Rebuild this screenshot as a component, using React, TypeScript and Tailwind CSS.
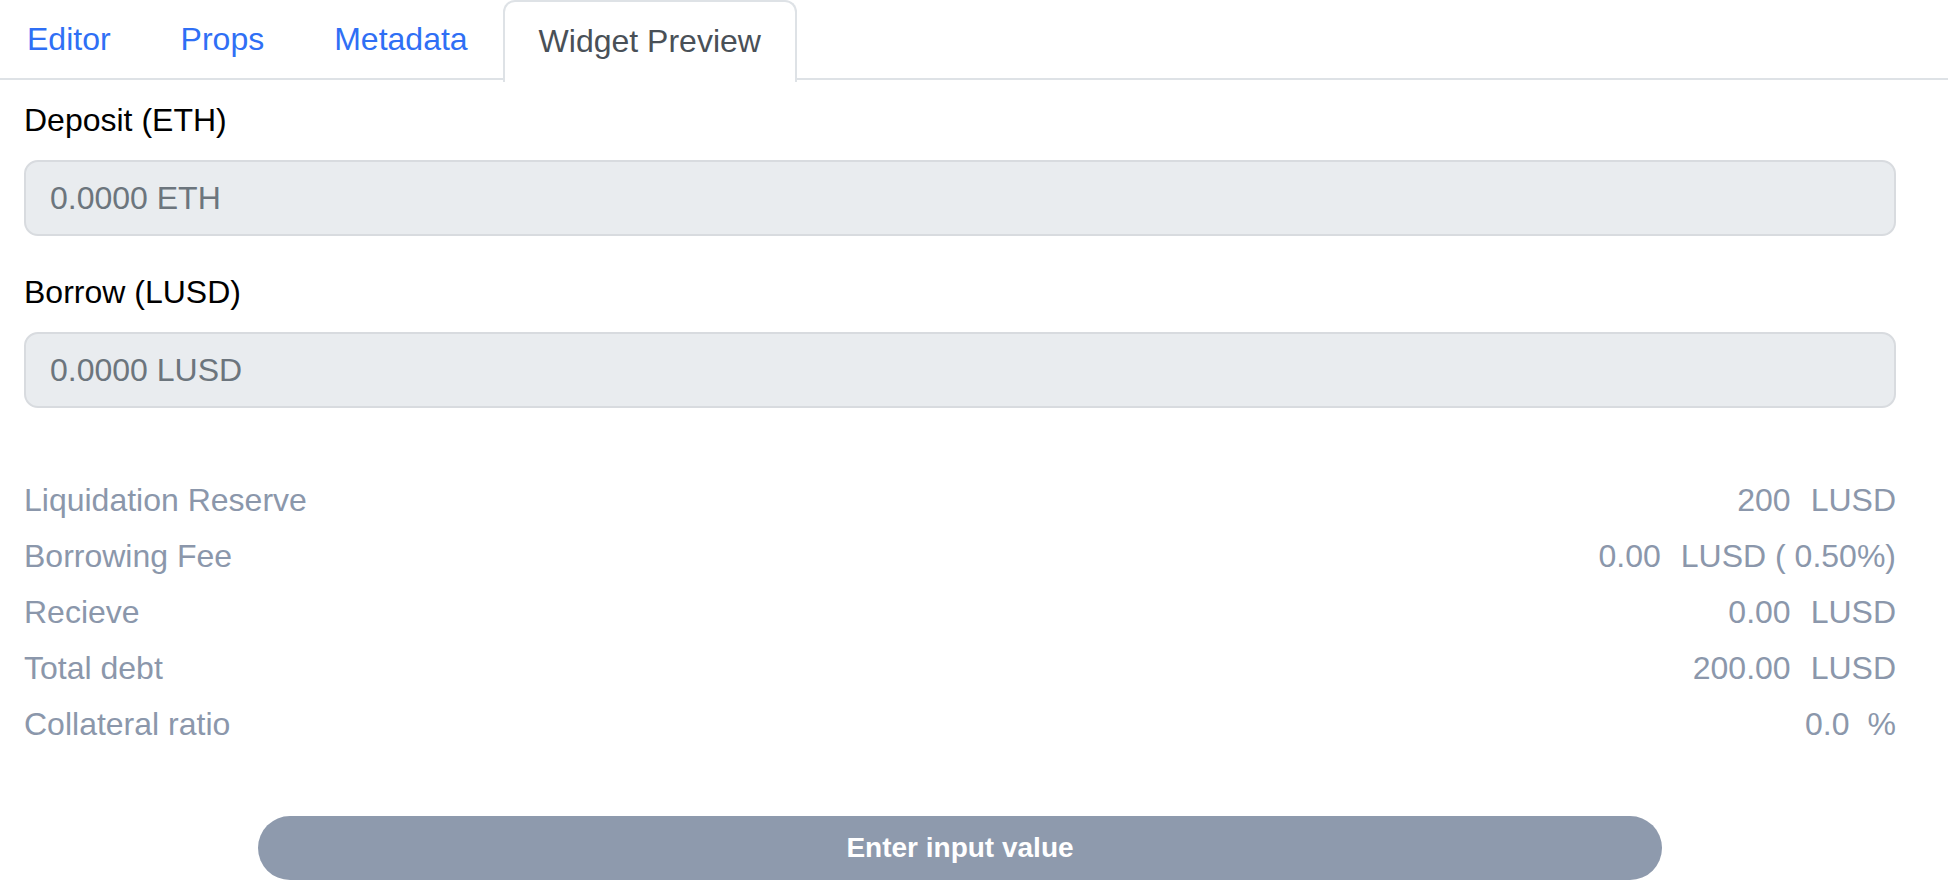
import React from "react";

const tabs = ["Editor", "Props", "Metadata", "Widget Preview"];

const rows: { label: string; value: React.ReactNode }[] = [
  { label: "Liquidation Reserve", value: <><span>200</span><span className="ml-[20px]">LUSD</span></> },
  { label: "Borrowing Fee", value: <><span>0.00</span><span className="ml-[20px]">LUSD</span><span> ( 0.50%)</span></> },
  { label: "Recieve", value: <><span>0.00</span><span className="ml-[20px]">LUSD</span></> },
  { label: "Total debt", value: <><span>200.00</span><span className="ml-[20px]">LUSD</span></> },
  { label: "Collateral ratio", value: <><span>0.0</span><span className="ml-[18px]">%</span></> },
];

function Field({ label, placeholder }: { label: string; placeholder: string }) {
  return (
    <div>
      <label className="block text-[32px] leading-[48px] text-black mb-[16px]">{label}</label>
      <input
        disabled
        placeholder={placeholder}
        className="block w-full h-[76px] rounded-[14px] border-2 border-[#d8dbdf] bg-[#e9ecef] px-[24px] text-[32px] text-[#212529] placeholder:text-[#6c757d] outline-none"
      />
    </div>
  );
}

export default function App() {
  return (
    <div className="h-[880px] overflow-hidden bg-white font-['Liberation_Sans',Arial,sans-serif]">
      <nav className="flex h-[80px] border-b-2 border-[#dee2e6]">
        <div className="flex -ml-[8px]">
          {tabs.map((t) => {
            const active = t === "Widget Preview";
            return (
              <div
                key={t}
                className={
                  active
                    ? "h-[82px] px-[34px] pb-[2px] flex items-center text-[32px] text-[#495057] bg-white border-2 border-b-0 border-[#dee2e6] rounded-t-[12px] -mb-[2px]"
                    : "h-[80px] px-[35px] pb-[2px] flex items-center text-[32px] text-[#2f6ff5]"
                }
              >
                {t}
              </div>
            );
          })}
        </div>
      </nav>

      <div className="pl-[24px] pr-[52px] pt-[16px]">
        <Field label="Deposit (ETH)" placeholder="0.0000 ETH" />
        <div className="h-[32px]" />
        <Field label="Borrow (LUSD)" placeholder="0.0000 LUSD" />

        <div className="mt-[64px] flex flex-col">
          {rows.map((r) => (
            <div key={r.label} className="flex justify-between text-[32px] leading-[56px] text-[#8b97ab]">
              <span>{r.label}</span>
              <span className="whitespace-pre">{r.value}</span>
            </div>
          ))}
        </div>

        <div className="mt-[64px] flex justify-center">
          <button className="w-[75%] h-[64px] rounded-full bg-[#8e9aad] text-white text-[28px] font-bold">
            Enter input value
          </button>
        </div>
      </div>
    </div>
  );
}
